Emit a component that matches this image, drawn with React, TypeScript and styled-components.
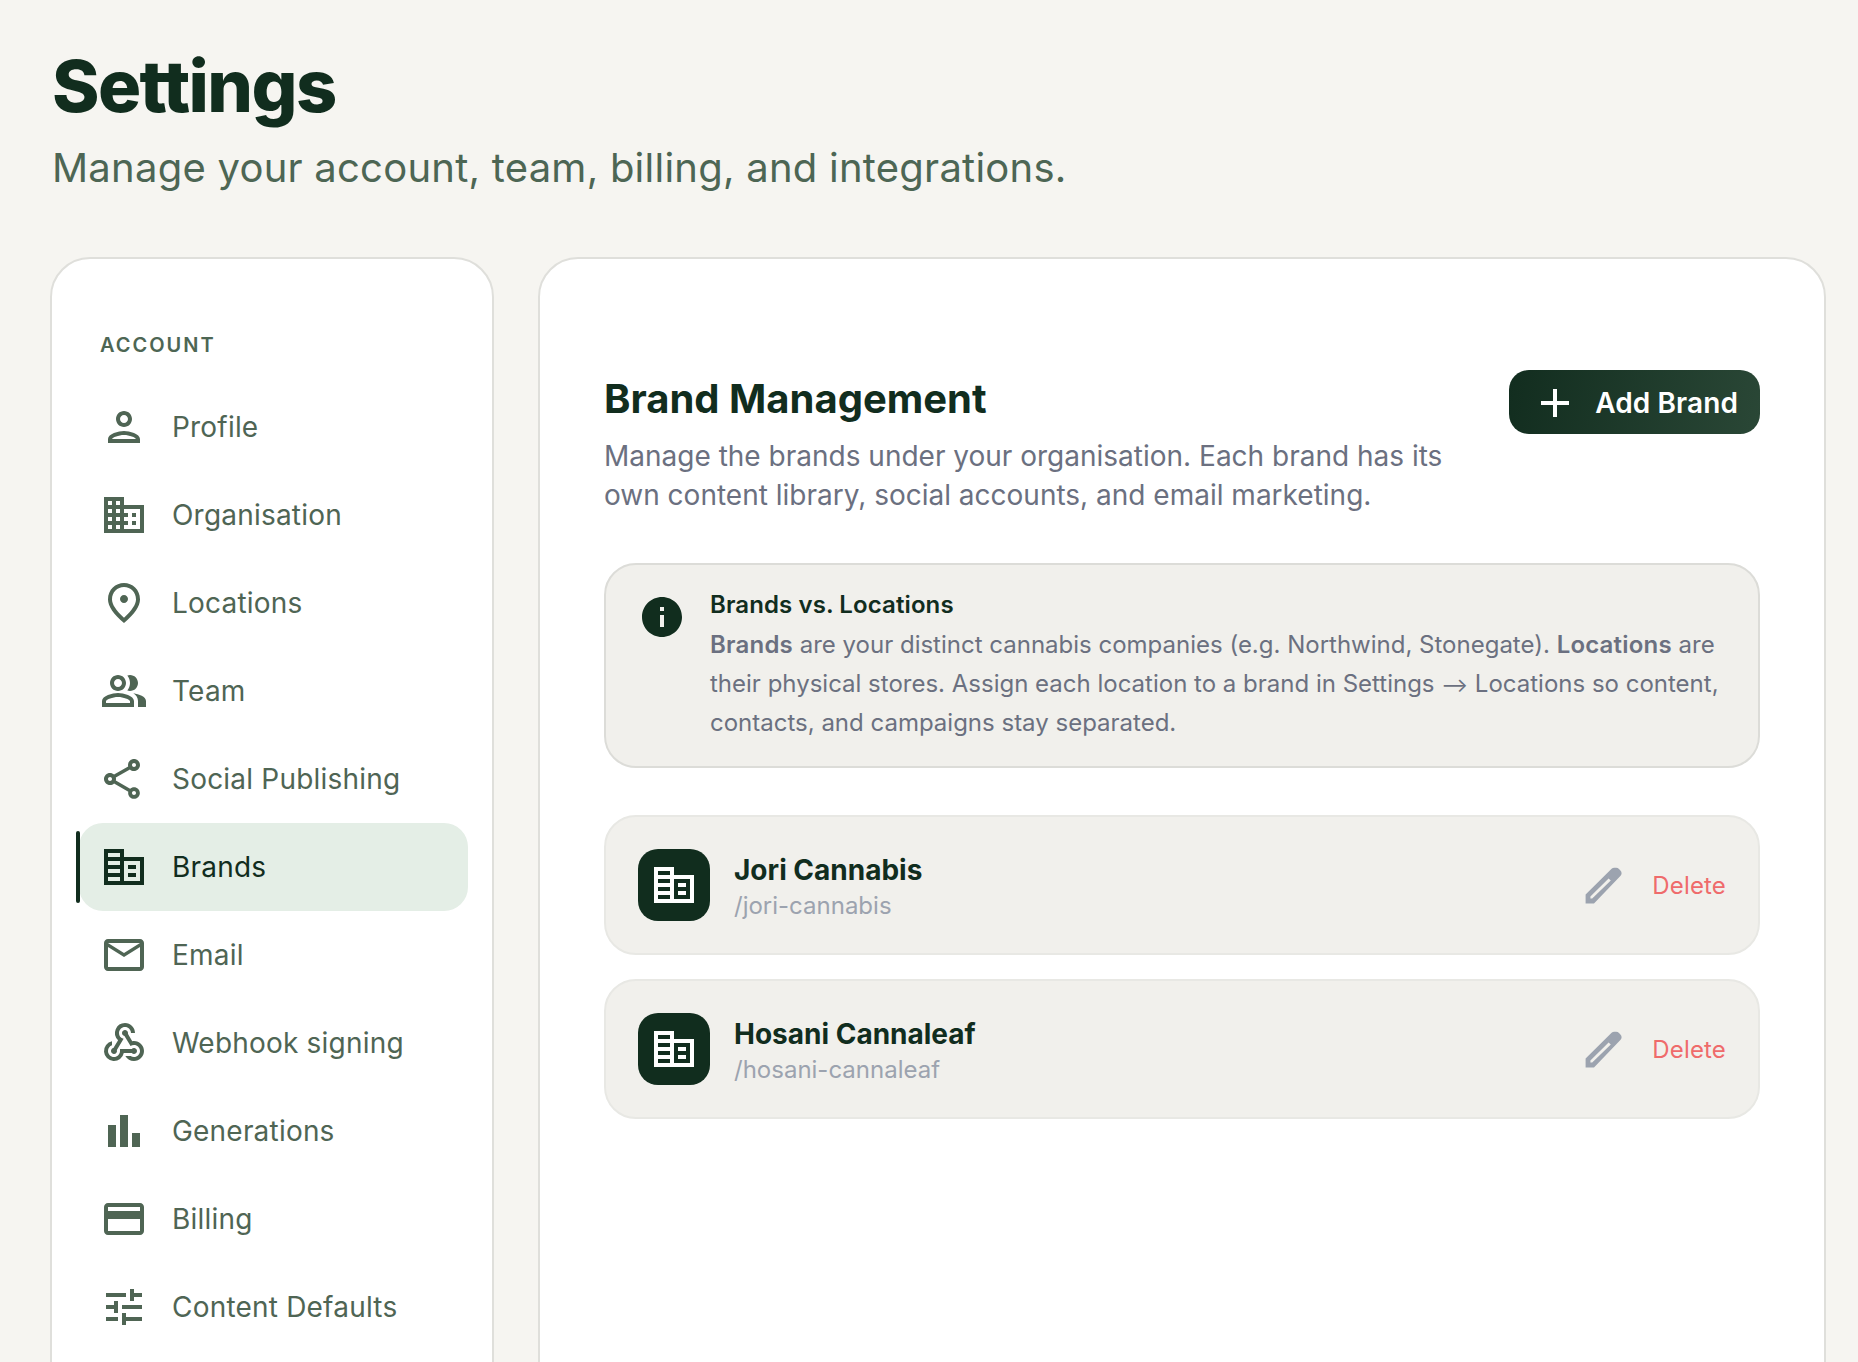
import React from "react";
import styled, { createGlobalStyle } from "styled-components";
import {
  MdOutlinePerson, MdOutlineDomain, MdOutlinePlace,
  MdOutlineEmail, MdOutlineWebhook, MdBarChart, MdOutlineCreditCard,
  MdOutlineTune, MdAdd, MdInfo,
} from "react-icons/md";

const Global = createGlobalStyle`
  html, body { margin: 0; padding: 0; height: 100%; overflow: hidden; background: #f6f5f1; }
  * { box-sizing: border-box; }
  body { font-family: Inter, "Noto Sans", sans-serif; -webkit-font-smoothing: antialiased; }
`;

const Page = styled.div`
  height: 100vh;
  overflow: hidden;
  padding: 40px 32px 0 50px;
`;
const Header = styled.header`
  margin-bottom: 61px;
`;
const Title = styled.h1`
  margin: 0 0 8px 2px;
  font-size: 72px;
  line-height: 92px;
  font-weight: 800;
  letter-spacing: -1.6px;
  color: #112d1e;
`;
const Subtitle = styled.p`
  margin: 0 0 0 2px;
  font-size: 40px;
  line-height: 56px;
  font-weight: 400;
  letter-spacing: 0.24px;
  color: #4d6654;
`;
const Columns = styled.div`
  display: flex;
  align-items: flex-start;
  gap: 44px;
`;
const Sidebar = styled.aside`
  flex: 0 0 444px;
  height: 1300px;
  background: #fff;
  border: 2px solid #dfdfdb;
  border-radius: 40px;
  padding: 71px 24px 0 27px;
`;
const SectionLabel = styled.div`
  margin: 0 0 23px 21px;
  font-size: 20px;
  line-height: 30px;
  font-weight: 600;
  letter-spacing: 2px;
  color: #4d6654;
`;
const NavItem = styled.div<{ $active?: boolean }>`
  position: relative;
  display: flex;
  align-items: center;
  gap: 24px;
  height: 88px;
  padding-left: 21px;
  border-radius: 24px;
  font-size: 28px;
  font-weight: 400;
  letter-spacing: 0.2px;
  color: ${(p) => (p.$active ? "#112d1e" : "#4f6554")};
  background: ${(p) => (p.$active ? "#e4eee6" : "transparent")};
  svg { flex: 0 0 48px; width: 48px; height: 48px; }
  ${(p) =>
    p.$active
      ? `&::before { content: ""; position: absolute; left: -3px; top: 8px; width: 4px; height: 72px; background: #112d1e; border-radius: 2px; }`
      : ""}
`;
const Main = styled.main`
  flex: 1;
  height: 1300px;
  background: #fff;
  border: 2px solid #dfdfdb;
  border-radius: 40px;
  padding: 111px 64px 0 64px;
`;
const TopRow = styled.div`
  display: flex;
  justify-content: space-between;
  align-items: flex-start;
  margin-bottom: 48px;
`;
const Heading = styled.h2`
  margin: 1px 0 10px;
  font-size: 40px;
  line-height: 56px;
  font-weight: 700;
  color: #112d1e;
`;
const Description = styled.p`
  margin: 0;
  width: 860px;
  font-size: 28px;
  line-height: 39px;
  color: #6b7080;
`;
const AddButton = styled.button`
  display: flex;
  align-items: center;
  gap: 16px;
  height: 64px;
  padding: 1px 22px 0 22px;
  border: 0;
  border-radius: 20px;
  background: linear-gradient(100deg, #122d1f, #2a4736);
  color: #fff;
  font-family: inherit;
  font-size: 28px;
  font-weight: 600;
  letter-spacing: 0.1px;
  svg { width: 48px; height: 48px; }
`;
const InfoBox = styled.section`
  display: flex;
  gap: 24px;
  height: 205px;
  padding: 20px 30px 0 32px;
  margin-bottom: 47px;
  background: #f1f0ec;
  border: 2px solid #dcdcd8;
  border-radius: 32px;
  > svg { flex: 0 0 48px; width: 48px; height: 48px; color: #112d1e; margin-top: 8px; }
`;
const InfoTitle = styled.div`
  font-size: 24px;
  line-height: 39px;
  font-weight: 600;
  letter-spacing: 0.1px;
  color: #112d1e;
  margin-bottom: 1px;
`;
const InfoText = styled.p`
  margin: 0;
  font-size: 24px;
  line-height: 39px;
  color: #6b7080;
  strong { font-weight: 600; letter-spacing: 0.2px; }
`;
const Arrow = styled.span`
  font-size: 20px;
  line-height: 0;
`;
const BrandRow = styled.div`
  display: flex;
  align-items: center;
  height: 140px;
  padding: 0 32px;
  margin-bottom: 24px;
  background: #f1f0ec;
  border: 2px solid #e8e8e4;
  border-radius: 32px;
`;
const Avatar = styled.div`
  display: flex;
  align-items: center;
  justify-content: center;
  flex: 0 0 72px;
  height: 72px;
  margin-right: 24px;
  border-radius: 20px;
  background: #112d1e;
  color: #fff;
  svg { width: 48px; height: 48px; }
`;
const BrandText = styled.div`
  flex: 1;
  padding-top: 2px;
`;
const BrandName = styled.div`
  font-size: 28px;
  line-height: 40px;
  font-weight: 700;
  color: #112d1e;
`;
const BrandSlug = styled.div`
  font-size: 24px;
  line-height: 32px;
  color: #9ca3af;
`;
const EditSvg = styled.svg`
  width: 48px;
  height: 48px;
  color: #9ca3af;
  margin-right: 26px;
`;
const DeleteLabel = styled.span`
  font-size: 24px;
  letter-spacing: 0.15px;
  color: #ef6b6b;
`;

const BrandIcon = () => (
  <svg viewBox="0 0 24 24" fill="currentColor">
    <path d="M12 7V3H2v18h20V7H12zM10 19H4v-2h6v2zm0-4H4v-2h6v2zm0-4H4V9h6v2zm0-4H4V5h6v2zm10 12h-8V9h8v10zm-2-8h-4v2h4v-2zm0 4h-4v2h4v-2z" />
  </svg>
);
const TeamIcon = () => (
  <svg viewBox="0 0 24 24" fill="currentColor">
    <path d="M16.67 13.13C18.04 14.06 19 15.32 19 17v3h4v-3c0-2.18-3.57-3.47-6.33-3.87z" />
    <path d="M15 12c2.21 0 4-1.79 4-4s-1.79-4-4-4c-.47 0-.91.1-1.33.24C14.5 5.27 15 6.58 15 8s-.5 2.73-1.33 3.76c.42.14.86.24 1.33.24z" />
    <path d="M9 12c2.21 0 4-1.79 4-4s-1.79-4-4-4-4 1.79-4 4 1.79 4 4 4zm0-6c1.1 0 2 .9 2 2s-.9 2-2 2-2-.9-2-2 .9-2 2-2z" />
    <path d="M9 13c-2.67 0-8 1.34-8 4v3h16v-3c0-2.66-5.33-4-8-4zm6 5H3v-.99C3.2 16.29 6.3 15 9 15s5.8 1.29 6 2v1z" />
  </svg>
);
const ShareIcon = () => (
  <svg viewBox="1 0 24 24" fill="currentColor">
    <path d="M18 16.08c-.76 0-1.44.3-1.96.77L8.91 12.7c.05-.23.09-.46.09-.7s-.04-.47-.09-.7l7.05-4.11c.54.5 1.25.81 2.04.81 1.66 0 3-1.34 3-3s-1.34-3-3-3-3 1.34-3 3c0 .24.04.47.09.7L8.04 9.81C7.5 9.31 6.79 9 6 9c-1.66 0-3 1.34-3 3s1.34 3 3 3c.79 0 1.5-.31 2.04-.81l7.12 4.16c-.05.21-.08.43-.08.65 0 1.61 1.31 2.92 2.92 2.92 1.61 0 2.92-1.31 2.92-2.92s-1.31-2.92-2.92-2.92zM18 4c.55 0 1 .45 1 1s-.45 1-1 1-1-.45-1-1 .45-1 1-1zM6 13c-.55 0-1-.45-1-1s.45-1 1-1 1 .45 1 1-.45 1-1 1zm12 7.02c-.55 0-1-.45-1-1s.45-1 1-1 1 .45 1 1-.45 1-1 1z" />
  </svg>
);
const EditIcon = () => (
  <EditSvg viewBox="0 0 24 24" fill="currentColor">
    <path
      fillRule="evenodd"
      d="M3.8 21.2v-4.5L16.8 3.9q.6-.5 1.3-.5h1q.8 0 1.4.6l.7.7q.6.6.6 1.4 0 .7-.5 1.3L8 21.2H3.8zM6.2 18.8h.9L16.4 9.8l-1.1-1.1L6.2 17.7v1.1z"
    />
  </EditSvg>
);

const nav: [React.ComponentType, string][] = [
  [MdOutlinePerson, "Profile"],
  [MdOutlineDomain, "Organisation"],
  [MdOutlinePlace, "Locations"],
  [TeamIcon, "Team"],
  [ShareIcon, "Social Publishing"],
  [BrandIcon, "Brands"],
  [MdOutlineEmail, "Email"],
  [MdOutlineWebhook, "Webhook signing"],
  [MdBarChart, "Generations"],
  [MdOutlineCreditCard, "Billing"],
  [MdOutlineTune, "Content Defaults"],
];

const brands = [
  ["Jori Cannabis", "/jori-cannabis"],
  ["Hosani Cannaleaf", "/hosani-cannaleaf"],
];

export default function App() {
  return (
    <Page>
      <Global />
      <Header>
        <Title>Settings</Title>
        <Subtitle>Manage your account, team, billing, and integrations.</Subtitle>
      </Header>
      <Columns>
        <Sidebar>
          <SectionLabel>ACCOUNT</SectionLabel>
          {nav.map(([Icon, label]) => (
            <NavItem key={label} $active={label === "Brands"}>
              <Icon />
              {label}
            </NavItem>
          ))}
        </Sidebar>
        <Main>
          <TopRow>
            <div>
              <Heading>Brand Management</Heading>
              <Description>
                Manage the brands under your organisation. Each brand has its own content library, social accounts, and email marketing.
              </Description>
            </div>
            <AddButton><MdAdd />Add Brand</AddButton>
          </TopRow>
          <InfoBox>
            <MdInfo />
            <div>
              <InfoTitle>Brands vs. Locations</InfoTitle>
              <InfoText>
                <strong>Brands</strong> are your distinct cannabis companies (e.g. Northwind, Stonegate). <strong>Locations</strong> are their physical stores. Assign each location to a brand in Settings <Arrow>⟶</Arrow> Locations so content, contacts, and campaigns stay separated.
              </InfoText>
            </div>
          </InfoBox>
          {brands.map(([name, slug]) => (
            <BrandRow key={slug}>
              <Avatar><BrandIcon /></Avatar>
              <BrandText>
                <BrandName>{name}</BrandName>
                <BrandSlug>{slug}</BrandSlug>
              </BrandText>
              <EditIcon />
              <DeleteLabel>Delete</DeleteLabel>
            </BrandRow>
          ))}
        </Main>
      </Columns>
    </Page>
  );
}
